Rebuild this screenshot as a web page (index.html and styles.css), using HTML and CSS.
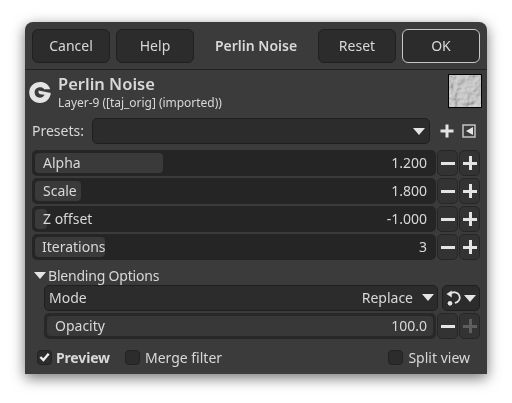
FILE: index.html
```html
<!DOCTYPE html>
<html lang="en">
<head>
    <meta charset="UTF-8">
    <meta name="viewport" content="width=device-width, initial-scale=1.0">
    <title>Perlin Noise</title>
    <link rel="stylesheet" href="styles.css">
</head>
<body>
    <div class="dialog">
        <div class="titlebar">
            <button class="button">Cancel</button>
            <button class="button">Help</button>
            <div class="title">Perlin Noise</div>
            <button class="button">Reset</button>
            <button class="button default">OK</button>
        </div>
        <div class="content">
            <div class="info">
                <svg class="logo" width="22" height="21" viewBox="2.5 3 19.5 19">
                    <path d="M21.5 9.5 C20 5 16.5 3 12.5 3 C6.8 3 2.5 7 2.5 12.5 C2.5 18 6.8 22 12.2 22 C17.5 22 21.5 18.5 22 13 L11 10.6 C10.5 12 11 13.6 12.5 14 L16.4 14.6 C15.4 16.4 14 17.2 12.2 17.2 C9.4 17.2 7.4 15.2 7.4 12.5 C7.4 9.8 9.4 7.8 12.4 7.8 C14 7.8 15.2 8.4 16 9.5 Z" fill="#e4e4e4"/>
                </svg>
                <div class="info-text">
                    <div class="info-title">Perlin Noise</div>
                    <div class="info-sub">Layer-9 ([taj_orig] (imported))</div>
                </div>
                <svg class="thumb" width="34" height="34">
                    <filter id="noise" x="0" y="0" width="100%" height="100%">
                        <feTurbulence type="fractalNoise" baseFrequency="0.14" numOctaves="4" seed="7"/>
                        <feDiffuseLighting surfaceScale="2.2" diffuseConstant="0.95" lighting-color="#d8d8d8">
                            <feDistantLight azimuth="225" elevation="60"/>
                        </feDiffuseLighting>
                    </filter>
                    <rect width="34" height="34" filter="url(#noise)"/>
                </svg>
            </div>

            <div class="presets">
                <span class="presets-label">Presets:</span>
                <div class="combo presets-combo"><span class="arrow"></span></div>
                <svg class="tool" width="16" height="16" viewBox="0 0 16 16">
                    <path d="M8 1.5v13M1.5 8h13" stroke="#e4e4e4" stroke-width="3"/>
                </svg>
                <svg class="tool" width="14" height="14" viewBox="0 0 14 14">
                    <rect x="1" y="1" width="12" height="12" fill="none" stroke="#c4c4c4" stroke-width="1.5"/>
                    <path d="M11 3v8L4 7z" fill="#e4e4e4"/>
                </svg>
            </div>

            <div class="sliders">
                <div class="spin-row">
                    <div class="slider">
                        <div class="fill" style="width: 128px"></div>
                        <span class="slider-label">Alpha</span>
                        <span class="value">1.200</span>
                    </div>
                    <div class="step"><span class="minus"></span></div>
                    <div class="step"><span class="plus"></span></div>
                </div>
                <div class="spin-row">
                    <div class="slider">
                        <div class="fill" style="width: 46px"></div>
                        <span class="slider-label">Scale</span>
                        <span class="value">1.800</span>
                    </div>
                    <div class="step"><span class="minus"></span></div>
                    <div class="step"><span class="plus"></span></div>
                </div>
                <div class="spin-row">
                    <div class="slider">
                        <div class="fill" style="width: 12px"></div>
                        <span class="slider-label">Z offset</span>
                        <span class="value">-1.000</span>
                    </div>
                    <div class="step"><span class="minus"></span></div>
                    <div class="step"><span class="plus"></span></div>
                </div>
                <div class="spin-row">
                    <div class="slider">
                        <div class="fill" style="width: 70px"></div>
                        <span class="slider-label iter">Iterations</span>
                        <span class="value">3</span>
                    </div>
                    <div class="step"><span class="minus"></span></div>
                    <div class="step"><span class="plus"></span></div>
                </div>
            </div>

            <div class="expander"><span class="arrow"></span>Blending Options</div>
            <div class="blending">
                <div class="mode-row">
                    <div class="combo mode-combo">
                        <span class="mode-label">Mode</span>
                        <span class="mode-value">Replace</span>
                        <span class="arrow"></span>
                    </div>
                    <div class="combo revert">
                        <svg width="16" height="16" viewBox="0 0 18 18">
                            <path d="M5 4.5 A6 6 0 1 1 10 14.5" fill="none" stroke="#e4e4e4" stroke-width="2"/>
                            <path d="M0.5 4.5 L6.5 0.5 V8.5 Z" fill="#e4e4e4"/>
                            <circle cx="4.5" cy="15" r="2.6" fill="#e4e4e4"/>
                        </svg>
                        <span class="arrow"></span>
                    </div>
                </div>
                <div class="spin-row">
                    <div class="slider opacity">
                        <div class="fill full"></div>
                        <span class="slider-label">Opacity</span>
                        <span class="value">100.0</span>
                    </div>
                    <div class="step"><span class="minus"></span></div>
                    <div class="step"><span class="plus off"></span></div>
                </div>
            </div>

            <div class="footer">
                <label class="check preview-check"><span class="box on">
                    <svg width="14" height="14" viewBox="0 0 14 14"><path d="M2.5 7 L5.8 10.2 L11.5 3.5" fill="none" stroke="#eee" stroke-width="2.6"/></svg>
                </span>Preview</label>
                <label class="check"><span class="box"></span>Merge filter</label>
                <label class="check split"><span class="box"></span>Split view</label>
            </div>
        </div>
    </div>
</body>
</html>
```

FILE: styles.css
```css
* {
    box-sizing: border-box;
}
body {
    margin: 0;
    padding: 22px 25px 29px;
    background-color: #fff;
    font-family: "Noto Sans", sans-serif;
    font-size: 14px;
    color: #d8d8d8;
}
.dialog {
    width: 462px;
    height: 352px;
    background-color: #3b3b3b;
    border-radius: 8px 8px 0 0;
    filter: drop-shadow(0 4px 7px rgba(0, 0, 0, 0.55));
}
.titlebar {
    display: flex;
    align-items: center;
    gap: 6px;
    height: 48px;
    padding: 0 7px;
    border-bottom: 1px solid #222;
}
.button {
    width: 78px;
    height: 34px;
    background-color: #2c2c2c;
    border: 1px solid #202020;
    border-radius: 6px;
    color: #d8d8d8;
    font: inherit;
    padding: 0;
}
.button.default {
    border-color: #c8c8c8;
}
.title {
    flex: 1;
    text-align: center;
    font-weight: 600;
}
.content {
    padding: 0 7px;
}
.info {
    display: flex;
    align-items: center;
    height: 42px;
    margin-left: -3px;
}
.logo {
    flex: none;
    margin-top: 2px;
}
.info-text {
    flex: 1;
    align-self: flex-start;
    margin-top: 4px;
    margin-left: 7px;
}
.info-title {
    font-size: 16.5px;
    font-weight: 600;
    line-height: 20px;
}
.info-sub {
    margin-top: 1px;
    font-size: 12px;
    letter-spacing: -0.03px;
    line-height: 16px;
}
.thumb {
    flex: none;
    margin-right: -2px;
    border: 1px solid #000;
}
.presets {
    display: flex;
    align-items: center;
    height: 26px;
    margin-top: 6px;
}
.presets-label {
    width: 60px;
    padding-bottom: 2px;
}
.combo {
    display: flex;
    align-items: center;
    background-color: #2c2c2c;
    border: 1px solid #1f1f1f;
    border-radius: 5px;
}
.presets-combo {
    flex: none;
    width: 338px;
    height: 26px;
    justify-content: flex-end;
    padding-right: 4px;
}
.arrow {
    display: inline-block;
    width: 0;
    height: 0;
    border-left: 6px solid transparent;
    border-right: 6px solid transparent;
    border-top: 7px solid #e4e4e4;
}
.tool {
    margin-left: 9px;
}
.tool + .tool {
    margin-left: 7px;
}
.sliders {
    display: flex;
    flex-direction: column;
    gap: 2px;
    margin-top: 6px;
}
.spin-row {
    display: flex;
    height: 26px;
}
.slider {
    position: relative;
    display: flex;
    align-items: center;
    justify-content: space-between;
    width: 404px;
    padding: 0 9px 2px 11px;
    background-color: #252525;
    border-radius: 5px;
}
.fill {
    position: absolute;
    left: 3px;
    top: 3px;
    bottom: 3px;
    background-color: #3a3a3a;
    border-radius: 4px;
}
.slider-label,
.value {
    position: relative;
}
.slider-label.iter {
    margin-left: -1px;
}
.step {
    display: flex;
    align-items: center;
    justify-content: center;
    width: 21px;
    margin-left: 1px;
    background-color: #333;
    border: 1px solid #262626;
    border-radius: 5px;
}
.minus,
.plus {
    position: relative;
    display: block;
    width: 14px;
    height: 14px;
}
.minus::before,
.plus::before,
.plus::after {
    content: "";
    position: absolute;
    background-color: #e4e4e4;
}
.minus::before,
.plus::before {
    left: 0;
    right: 0;
    top: 6px;
    height: 3px;
}
.plus::after {
    top: 0;
    bottom: 0;
    left: 6px;
    width: 3px;
}
.plus.off::before,
.plus.off::after {
    background-color: #5e5e5e;
}
.expander {
    display: flex;
    align-items: center;
    height: 20px;
    margin-top: 5px;
    letter-spacing: -0.2px;
}
.expander .arrow {
    margin: 0 2px 0 2px;
}
.blending {
    display: flex;
    flex-direction: column;
    gap: 2px;
    padding-left: 12px;
}
.mode-row {
    display: flex;
    height: 26px;
}
.mode-combo {
    flex: none;
    width: 394px;
    padding: 0 0 1px 4px;
}
.mode-label {
    flex: 1;
}
.mode-combo .arrow {
    margin: 0 3px 0 9px;
}
.revert {
    flex: none;
    justify-content: center;
    width: 38px;
    margin-left: 4px;
}
.revert .arrow {
    margin-left: 2px;
}
.opacity {
    width: 392px;
    background-color: #282828;
}
.fill.full {
    right: 3px;
    background-color: #383838;
}
.footer {
    display: flex;
    align-items: center;
    height: 20px;
    margin-top: 8px;
    padding-left: 5px;
}
.check {
    display: flex;
    align-items: center;
    gap: 5px;
    margin-right: 15px;
}
.box {
    display: flex;
    align-items: center;
    justify-content: center;
    width: 15px;
    height: 15px;
    background-color: #2c2c2c;
    border: 1px solid #222;
    border-radius: 4px;
}
.preview-check {
    gap: 4px;
    font-weight: 700;
    letter-spacing: -0.15px;
}
.split {
    margin-left: auto;
    margin-right: 10px;
}
```
